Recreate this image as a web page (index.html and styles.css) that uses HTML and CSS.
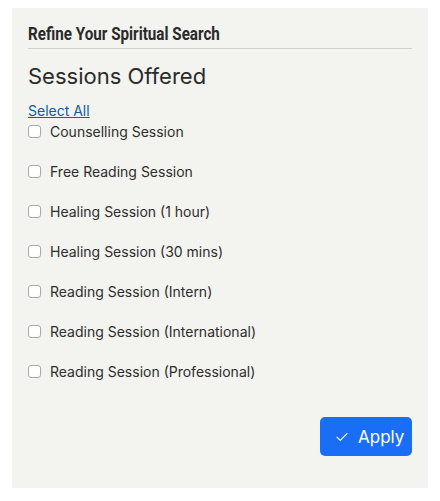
FILE: index.html
```html
<!DOCTYPE html>
<html>
<head>
<meta charset="utf-8">
<link rel="stylesheet" href="styles.css">
</head>
<body>
<div class="panel">
  <div class="panel-head"><span class="head-text">Refine Your Spiritual Search</span></div>
  <h2 class="title">Sessions Offered</h2>
  <a class="select-all" href="#">Select All</a>
  <ul class="options">
    <li class="option"><span class="box"></span><span class="label">Counselling Session</span></li>
    <li class="option"><span class="box"></span><span class="label">Free Reading Session</span></li>
    <li class="option"><span class="box"></span><span class="label">Healing Session (1 hour)</span></li>
    <li class="option"><span class="box"></span><span class="label">Healing Session (30 mins)</span></li>
    <li class="option"><span class="box"></span><span class="label">Reading Session (Intern)</span></li>
    <li class="option"><span class="box"></span><span class="label">Reading Session (International)</span></li>
    <li class="option"><span class="box"></span><span class="label">Reading Session (Professional)</span></li>
  </ul>
  <div class="actions">
    <button class="apply"><svg class="check" width="12" height="10" viewBox="0 0 12 10"><path d="M1 5.2 L4.2 8.4 L11 1.6" fill="none" stroke="#fff" stroke-width="1.2" stroke-linecap="round" stroke-linejoin="round"/></svg><span>Apply</span></button>
  </div>
</div>
</body>
</html>
```
FILE: styles.css
```css
html, body { margin: 0; padding: 0; background: #fff; }
body { font-family: Inter, "Noto Sans", sans-serif; color: #2b2b2b; }
.panel {
  margin: 8px 0 0 12px;
  width: 416px;
  height: 480px;
  box-sizing: border-box;
  background: #f3f3ef;
  padding: 16px 16px 0 16px;
}
.panel-head {
  font-family: Roboto, "DejaVu Sans", sans-serif;
  font-weight: bold;
  font-size: 18px;
  line-height: 20px;
  padding-bottom: 4px;
  color: #2a2a2a;
  border-bottom: 1px solid #cfcfcb;
  white-space: nowrap;
}
.head-text {
  display: inline-block;
  transform: scaleX(0.845);
  transform-origin: left center;
}
.title {
  font-family: Inter, sans-serif;
  font-weight: 400;
  font-size: 22px;
  line-height: 28px;
  margin: 13px 0 0 0;
  color: #2b2b2b;
}
.select-all {
  display: block;
  margin-top: 11px;
  font-size: 14px;
  line-height: 20px;
  color: #0b5cad;
  text-decoration: underline;
}
.options { list-style: none; margin: 0; padding: 0; }
.option {
  display: flex;
  align-items: center;
  height: 20px;
  margin-bottom: 20px;
  font-size: 14px;
}
.box {
  width: 11px; height: 11px;
  border: 1px solid #a9a9a9;
  border-radius: 3px;
  background: #fff;
  margin-right: 9px;
}
.label { color: #2e2e2e; }
.actions { display: flex; justify-content: flex-end; margin-top: 36px; }
.apply {
  display: flex; align-items: center; gap: 10px;
  width: 92px; height: 39px;
  padding: 0 0 0 16px;
  background: #1a6ef5;
  border: none; border-radius: 5px;
  color: #fff;
  font-family: Inter, sans-serif;
  font-size: 17px;
}
```
